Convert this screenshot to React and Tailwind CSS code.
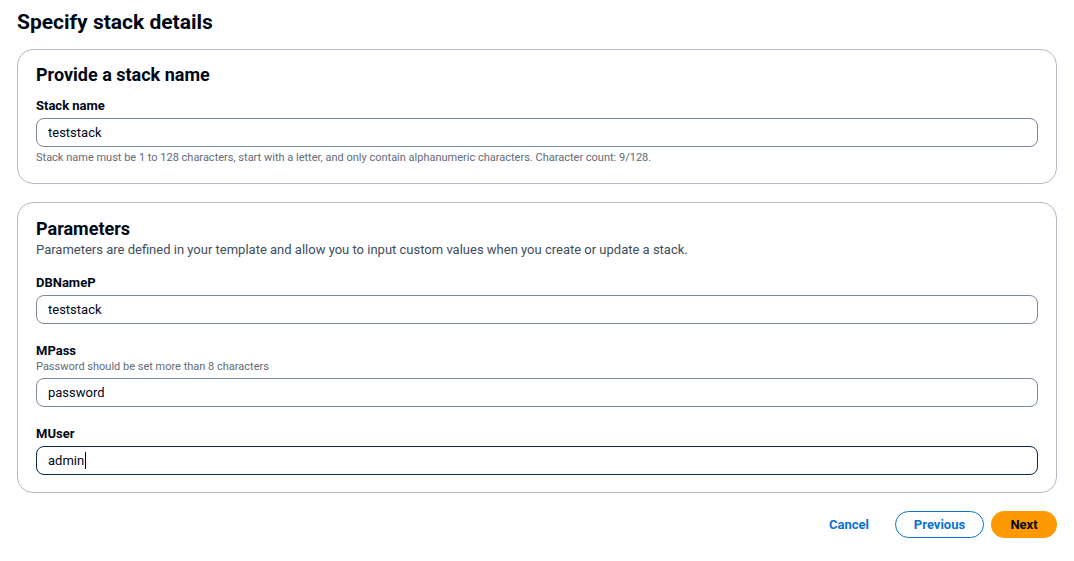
import React from "react";

const font = "font-['Roboto','Open_Sans',sans-serif]";

function Field({ label, hint, value, focused }) {
  return (
    <div className="flex flex-col">
      <label className="text-[13px] font-bold leading-[18px] text-[#000716]">{label}</label>
      {hint && <p className="text-[11px] leading-[14px] text-[#5f6b7a]">{hint}</p>}
      <div
        className={
          (hint ? "mt-[4px] " : "mt-[3px] ") +
          "flex h-[29px] items-center rounded-[8px] border px-[11px] text-[13px] text-[#000716] " +
          (focused ? "border-[#0f2a47]" : "border-[#7d8998]")
        }
      >
        <span>{value}</span>
        {focused && <span className="ml-[1px] h-[17px] w-[1px] bg-black" />}
      </div>
    </div>
  );
}

export default function App() {
  return (
    <div className={"min-h-screen bg-white px-[17px] pt-[8px] text-[#000716] " + font}>
      <h1 className="text-[21px] font-bold leading-[28px]">Specify stack details</h1>

      <section className="mt-[13px] rounded-[16px] border border-[#b4bac3] px-[18px] pt-[14px] pb-[18px]">
        <h2 className="text-[18px] font-bold leading-[22px]">Provide a stack name</h2>
        <div className="mt-[11px]">
          <Field label="Stack name" value="teststack" />
          <p className="mt-[4px] text-[11px] leading-[14px] text-[#5f6b7a]">
            Stack name must be 1 to 128 characters, start with a letter, and only contain alphanumeric characters. Character count: 9/128.
          </p>
        </div>
      </section>

      <section className="mt-[18px] rounded-[16px] border border-[#b4bac3] px-[18px] pt-[15px] pb-[17px]">
        <h2 className="text-[18px] font-bold leading-[22px]">Parameters</h2>
        <p className="mt-[1px] text-[13px] leading-[18px] text-[#414d5c]">
          Parameters are defined in your template and allow you to input custom values when you create or update a stack.
        </p>
        <div className="mt-[15px] flex flex-col gap-[18px]">
          <Field label="DBNameP" value="teststack" />
          <Field label="MPass" hint="Password should be set more than 8 characters" value="password" />
          <Field label="MUser" value="admin" focused />
        </div>
      </section>

      <div className="mt-[18px] flex items-center justify-end">
        <button className="px-[16px] text-[13px] font-bold text-[#0972d3]">Cancel</button>
        <button className="ml-[10px] h-[27px] w-[89px] rounded-full border border-[#0972d3] text-[13px] font-bold text-[#0972d3]">
          Previous
        </button>
        <button className="ml-[7px] h-[27px] w-[66px] rounded-full bg-[#ff9900] text-[13px] font-bold text-[#000716]">
          Next
        </button>
      </div>
    </div>
  );
}
